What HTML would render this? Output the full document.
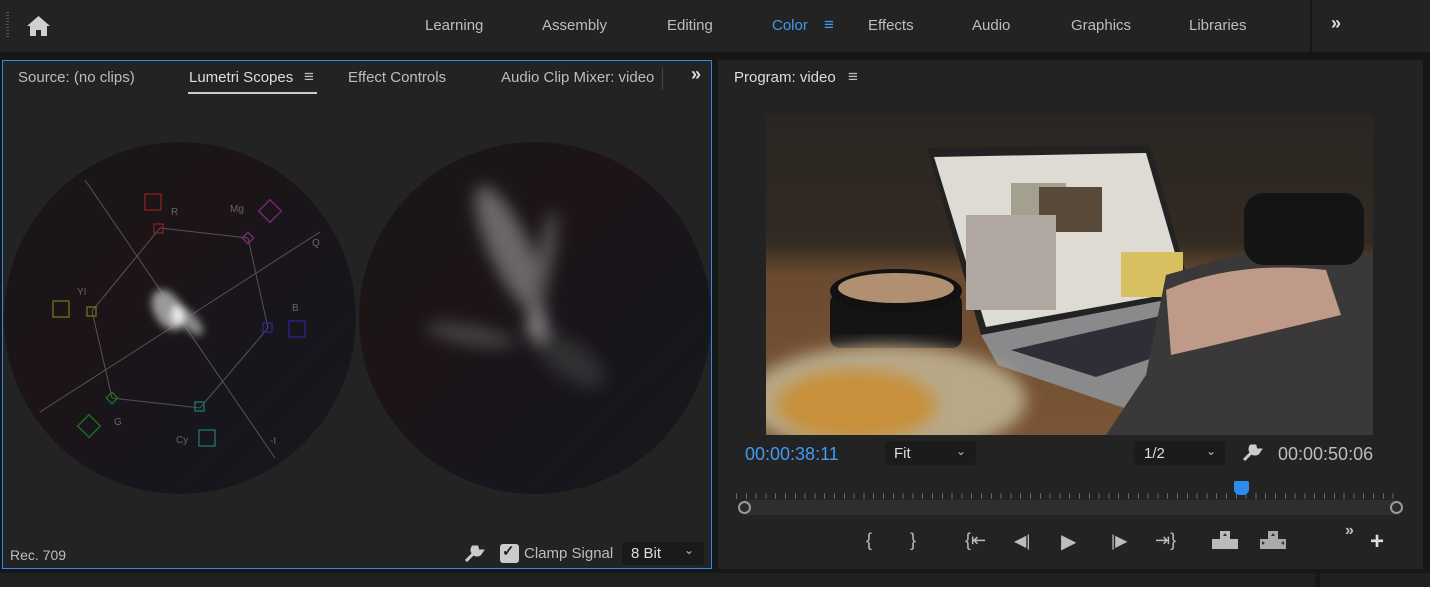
<!DOCTYPE html>
<html><head><style>
*{margin:0;padding:0;box-sizing:border-box}
body{width:1430px;height:589px;background:#fff;position:relative;overflow:hidden;font-family:"Liberation Sans",sans-serif;color:#bdbdbd}
.a{position:absolute}
.t{position:absolute;font-size:15px;white-space:nowrap}
</style></head><body>
<div class="a" style="left:0;top:0;width:1430px;height:587px;background:#161616"></div>
<div class="a" style="left:0;top:0;width:1430px;height:52px;background:#232323"></div>
<div class="a" style="left:1310px;top:0;width:2px;height:52px;background:#161616"></div>
<div class="a" style="left:6px;top:12px;width:3px;height:26px;background:repeating-linear-gradient(#555 0 1px,transparent 1px 3px)"></div>
<svg class="a" style="left:26px;top:15px" width="25" height="22" viewBox="0 0 25 22"><path d="M12.5 1 L1 11 L4 11 L4 21 L10 21 L10 15 L15 15 L15 21 L21 21 L21 11 L24 11 Z" fill="#d0d0d0"/></svg>
<div class="t" style="left:425px;top:17px">Learning</div>
<div class="t" style="left:542px;top:17px">Assembly</div>
<div class="t" style="left:667px;top:17px">Editing</div>
<div class="t" style="left:772px;top:17px;color:#3f9cf0">Color</div>
<div class="t" style="left:824px;top:15px;color:#3f9cf0;font-size:17px">≡</div>
<div class="t" style="left:868px;top:17px">Effects</div>
<div class="t" style="left:972px;top:17px">Audio</div>
<div class="t" style="left:1071px;top:17px">Graphics</div>
<div class="t" style="left:1189px;top:17px">Libraries</div>
<div class="t" style="left:1331px;top:13px;font-size:18px;font-weight:bold;color:#ddd">»</div>

<div class="a" style="left:2px;top:60px;width:710px;height:509px;background:#232323;border:1.5px solid #2d8ceb"></div>
<div class="t" style="left:18px;top:69px">Source: (no clips)</div>
<div class="t" style="left:189px;top:69px;color:#ddd">Lumetri Scopes</div>
<div class="t" style="left:304px;top:67px;font-size:17px">≡</div>
<div class="a" style="left:188px;top:92px;width:129px;height:2px;background:#ccc"></div>
<div class="t" style="left:348px;top:69px">Effect Controls</div>
<div class="t" style="left:501px;top:69px">Audio Clip Mixer: video</div>
<div class="a" style="left:662px;top:68px;width:1px;height:22px;background:#444"></div>
<div class="t" style="left:691px;top:64px;font-size:18px;font-weight:bold;color:#ddd">»</div>

<div class="a" style="left:4px;top:142px;width:352px;height:352px;border-radius:50%;background:linear-gradient(135deg,#1a1714,#1c1418 40%,#17161c 70%,#141a1a)"></div>
<div class="a" style="left:359px;top:142px;width:352px;height:352px;border-radius:50%;background:linear-gradient(135deg,#1a1714,#1c1418 40%,#17161c 70%,#141a1a)"></div>
<svg class="a" style="left:0;top:140px" width="712" height="360">
<defs><filter id="b"><feGaussianBlur stdDeviation="4"/></filter><filter id="b2"><feGaussianBlur stdDeviation="8"/></filter></defs>
<g stroke="#555" stroke-width="1" fill="none">
<line x1="85" y1="40" x2="275" y2="318"/><line x1="40" y1="272" x2="320" y2="92"/>
<polygon points="160,88 248,98 268,188 200,268 112,258 92,171"/>
</g>
<g fill="none" stroke-width="1.5">
<rect x="145" y="54" width="16" height="16" stroke="#7a2020"/><rect x="154" y="84" width="9" height="9" stroke="#7a2020"/>
<rect x="262" y="63" width="16" height="16" stroke="#702a70" transform="rotate(45 270 71)"/><rect x="244" y="94" width="8" height="8" stroke="#702a70" transform="rotate(45 248 98)"/>
<rect x="289" y="181" width="16" height="16" stroke="#262480"/><rect x="263" y="183" width="9" height="9" stroke="#262480"/>
<rect x="199" y="290" width="16" height="16" stroke="#1e6a6a"/><rect x="195" y="262" width="9" height="9" stroke="#1e6a6a"/>
<rect x="81" y="278" width="16" height="16" stroke="#1e6a1e" transform="rotate(45 89 286)"/><rect x="108" y="254" width="8" height="8" stroke="#1e6a1e" transform="rotate(45 112 258)"/>
<rect x="53" y="161" width="16" height="16" stroke="#606a1e"/><rect x="87" y="167" width="9" height="9" stroke="#606a1e"/>
</g>
<g fill="#666" font-size="10" font-family="Liberation Sans">
<text x="171" y="75">R</text><text x="230" y="72">Mg</text><text x="312" y="106">Q</text><text x="292" y="171">B</text>
<text x="176" y="303">Cy</text><text x="114" y="285">G</text><text x="270" y="304">-I</text><text x="77" y="155">YI</text></g>
<g filter="url(#b)">
<ellipse cx="168" cy="170" rx="14" ry="22" fill="#999" transform="rotate(-30 168 170)"/>
<ellipse cx="188" cy="180" rx="8" ry="20" fill="#888" transform="rotate(-45 188 180)"/>
<ellipse cx="178" cy="175" rx="6" ry="10" fill="#eee"/>
</g>
<g filter="url(#b2)" opacity=".55">
<ellipse cx="510" cy="110" rx="20" ry="70" fill="#aaa" transform="rotate(-25 510 110)"/>
<ellipse cx="545" cy="120" rx="8" ry="50" fill="#888" transform="rotate(10 545 120)"/>
<ellipse cx="470" cy="195" rx="45" ry="10" fill="#666" transform="rotate(10 470 195)"/>
<ellipse cx="570" cy="220" rx="40" ry="18" fill="#444" transform="rotate(35 570 220)"/>
<ellipse cx="537" cy="185" rx="10" ry="16" fill="#ddd"/>
</g>
</svg>
<div class="t" style="left:10px;top:547px;font-size:14px">Rec. 709</div>
<svg class="a" style="left:463px;top:543px" width="22" height="20"><path d="M3 18 L12 9 M10 4 A5 5 0 0 0 17 11 L19 8 L15 8 L14 4 Z" stroke="#ccc" stroke-width="3" fill="#ccc"/></svg>
<div class="a" style="left:500px;top:544px;width:19px;height:19px;background:#ccc;border-radius:3px"></div>
<div class="t" style="left:502px;top:542px;color:#222;font-weight:bold">✓</div>
<div class="t" style="left:524px;top:545px">Clamp Signal</div>
<div class="a" style="left:622px;top:542px;width:82px;height:23px;background:#1a1a1a;border-radius:3px"></div>
<div class="t" style="left:631px;top:545px;color:#ddd">8 Bit</div>
<div class="t" style="left:684px;top:543px;font-size:12px">⌄</div>

<div class="a" style="left:718px;top:60px;width:705px;height:509px;background:#232323"></div>
<div class="t" style="left:734px;top:69px;color:#ddd">Program: video</div>
<div class="t" style="left:848px;top:67px;font-size:17px">≡</div>
<svg class="a" style="left:766px;top:115px" width="607" height="320" viewBox="0 0 607 320">
<defs><filter id="v"><feGaussianBlur stdDeviation="3"/></filter><filter id="v2"><feGaussianBlur stdDeviation="8"/></filter>
<linearGradient id="bg" x1="0" y1="0" x2="0" y2="1"><stop offset="0" stop-color="#2a2622"/><stop offset=".4" stop-color="#332a22"/><stop offset=".5" stop-color="#6a4a30"/><stop offset="1" stop-color="#7a5535"/></linearGradient></defs>
<rect width="607" height="320" fill="url(#bg)"/>
<polygon points="215,220 426,180 510,205 364,295 232,250" fill="#8a8a8c"/>
<polygon points="245,235 420,195 470,215 330,262" fill="#2e2e36"/>
<polygon points="161,33 384,30 426,180 215,220" fill="#222"/>
<polygon points="168,42 380,38 420,176 220,212" fill="#dedad4"/>
<rect x="245" y="68" width="55" height="35" fill="#a4a090"/>
<rect x="273" y="72" width="63" height="45" fill="#5a4a3a"/>
<rect x="200" y="100" width="90" height="95" fill="#b0a8a0"/>
<rect x="355" y="137" width="62" height="45" fill="#d8c060"/>
<rect x="64" y="178" width="132" height="55" fill="#141414" rx="10"/>
<ellipse cx="130" cy="176" rx="66" ry="22" fill="#111"/>
<ellipse cx="130" cy="173" rx="58" ry="15" fill="#b09070"/>
<path d="M400 160 L540 120 L607 140 L607 320 L340 320 L380 260 Z" fill="#3a3838"/>
<path d="M400 175 Q470 145 560 155 L575 200 L440 232 L405 240 Z" fill="#c09a88"/>
<rect x="478" y="78" width="120" height="72" rx="20" fill="#141414"/>
<ellipse cx="120" cy="285" rx="140" ry="55" fill="#b8a888" filter="url(#v2)"/>
<ellipse cx="90" cy="290" rx="80" ry="35" fill="#c8903a" filter="url(#v2)"/>
</svg>
<div class="t" style="left:745px;top:444px;color:#3f9cf0;font-size:18px">00:00:38:11</div>
<div class="a" style="left:885px;top:441px;width:91px;height:24px;background:#1b1b1b;border-radius:3px"></div>
<div class="t" style="left:894px;top:445px;color:#ddd">Fit</div><div class="t" style="left:956px;top:444px;font-size:12px">⌄</div>
<div class="a" style="left:1134px;top:441px;width:91px;height:24px;background:#1b1b1b;border-radius:3px"></div>
<div class="t" style="left:1144px;top:445px;color:#ddd">1/2</div><div class="t" style="left:1206px;top:444px;font-size:12px">⌄</div>
<svg class="a" style="left:1241px;top:442px" width="22" height="20"><path d="M3 18 L12 9 M10 4 A5 5 0 0 0 17 11 L19 8 L15 8 L14 4 Z" stroke="#ccc" stroke-width="3" fill="#ccc"/></svg>
<div class="t" style="left:1278px;top:444px;font-size:18px">00:00:50:06</div>
<div class="a" style="left:736px;top:493px;width:660px;height:6px;background:repeating-linear-gradient(90deg,#666 0 1px,transparent 1px 9.8px)"></div>
<div class="a" style="left:744px;top:500px;width:654px;height:15px;background:#2e2e2e"></div>
<div class="a" style="left:738px;top:501px;width:13px;height:13px;border:2px solid #999;border-radius:50%;background:#2a2a2a"></div>
<div class="a" style="left:1390px;top:501px;width:13px;height:13px;border:2px solid #999;border-radius:50%;background:#2a2a2a"></div>
<div class="a" style="left:1234px;top:481px;width:15px;height:14px;background:#2d8ceb;border-radius:2px 2px 40% 40%"></div>
<div class="t" style="left:866px;top:530px;font-size:18px">{</div>
<div class="t" style="left:910px;top:530px;font-size:18px">}</div>
<div class="t" style="left:965px;top:530px;font-size:18px">{⇤</div>
<div class="t" style="left:1014px;top:531px;font-size:16px">◀|</div>
<div class="t" style="left:1061px;top:529px;font-size:20px">▶</div>
<div class="t" style="left:1111px;top:531px;font-size:16px">|▶</div>
<div class="t" style="left:1155px;top:530px;font-size:18px">⇥}</div>
<svg class="a" style="left:1211px;top:530px" width="28" height="20"><path d="M9 1h10v8h8v10H1V9h8z" fill="#bbb"/><path d="M12 6l2-3 2 3z" fill="#333"/></svg>
<svg class="a" style="left:1259px;top:530px" width="28" height="20"><path d="M9 1h10v8h8v10H1V9h8z" fill="#aaa"/><path d="M12 6l2-3 2 3zM3 11l3 2-3 2zM25 11l-3 2 3 2z" fill="#333"/></svg>
<div class="t" style="left:1345px;top:522px;font-size:16px;font-weight:bold">»</div>
<div class="t" style="left:1370px;top:528px;font-size:24px;font-weight:bold;color:#ddd">+</div>
<div class="a" style="left:0;top:573px;width:1430px;height:14px;background:#202020"></div>
<div class="a" style="left:1315px;top:573px;width:5px;height:14px;background:#161616"></div>
</body></html>
